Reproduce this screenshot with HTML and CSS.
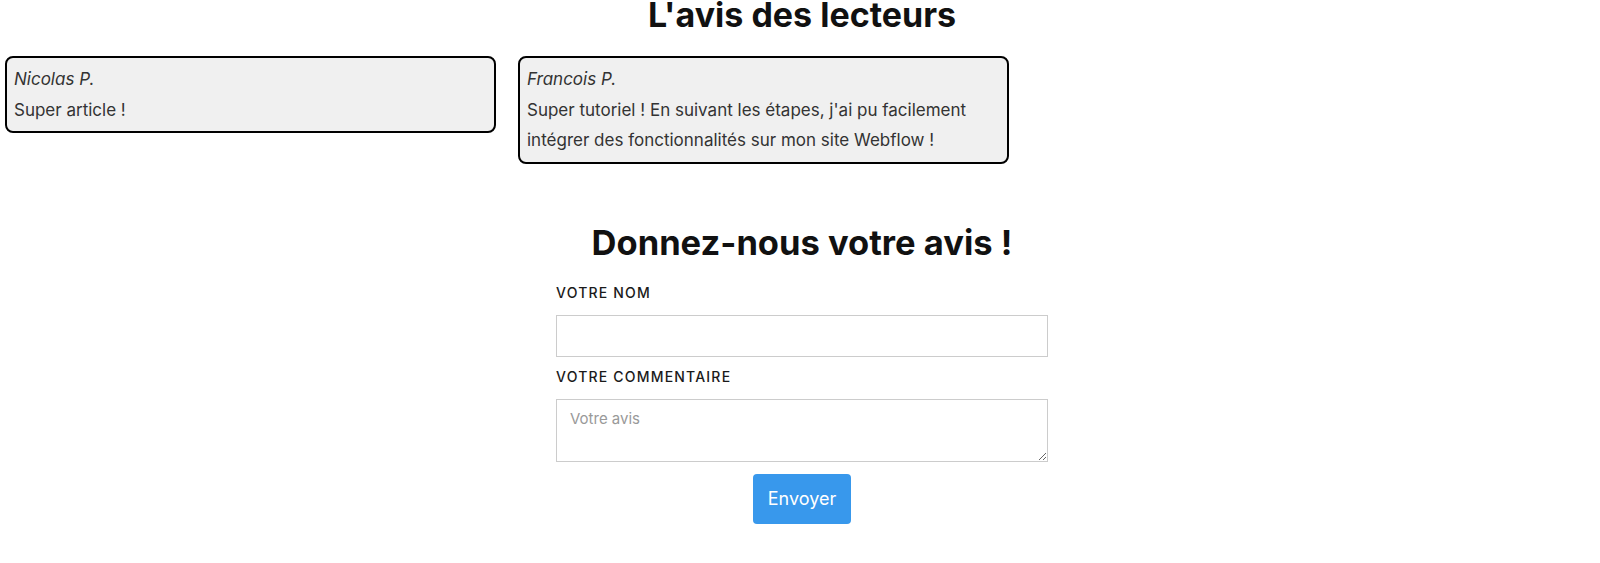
FILE: index.html
```html
<!DOCTYPE html>
<html lang="fr">
<head>
<meta charset="utf-8">
<title>L'avis des lecteurs</title>
<link rel="stylesheet" href="styles.css">
</head>
<body>
<div class="page">
  <h2 class="section-title">L'avis des lecteurs</h2>
  <div class="reviews">
    <div class="review">
      <div class="review-name">Nicolas P.</div>
      <div class="review-text">Super article !</div>
    </div>
    <div class="review">
      <div class="review-name">Francois P.</div>
      <div class="review-text">Super tutoriel ! En suivant les étapes, j'ai pu facilement intégrer des fonctionnalités sur mon site Webflow !</div>
    </div>
  </div>
  <h1 class="form-title">Donnez-nous votre avis !</h1>
  <form class="review-form">
    <label class="field-label" for="name">Votre nom</label>
    <input class="field" id="name" type="text">
    <label class="field-label" for="comment">Votre commentaire</label>
    <textarea class="field textarea" id="comment" placeholder="Votre avis"></textarea>
    <div class="actions">
      <button class="submit" type="button">Envoyer</button>
    </div>
  </form>
</div>
</body>
</html>
```
FILE: styles.css
```css
html, body {
  margin: 0;
  padding: 0;
  background: #ffffff;
}
body {
  font-family: Inter, "Noto Sans", sans-serif;
  color: #333333;
  font-size: 16px;
}
.page {
  box-sizing: border-box;
  width: 1600px;
  padding-left: 4px;
}
.section-title {
  margin: 0;
  font-size: 34px;
  line-height: 30px;
  font-weight: 700;
  color: #111111;
  text-align: center;
}
.reviews {
  display: flex;
  gap: 22px;
  margin: 26px 0 0 1px;
  align-items: flex-start;
}
.review {
  width: 491px;
  box-sizing: border-box;
  border: 2px solid #000000;
  border-radius: 8px;
  background: #f0f0f0;
  padding: 6px 6px 6px 7px;
  font-size: 17px;
  line-height: 30.5px;
  color: #333333;
}
.review-name {
  font-style: italic;
}
.form-title {
  margin: 57px 0 0 0;
  font-size: 34.5px;
  line-height: 44px;
  font-weight: 700;
  color: #111111;
  text-align: center;
}
.review-form {
  width: 492px;
  margin: 18px auto 0 auto;
  display: flex;
  flex-direction: column;
}
.field-label {
  font-size: 14px;
  line-height: 20px;
  font-weight: 500;
  text-transform: uppercase;
  letter-spacing: 1.2px;
  color: #1a1a1a;
  margin-bottom: 12px;
}
.field {
  box-sizing: border-box;
  width: 100%;
  height: 42px;
  border: 1px solid #cccccc;
  padding: 9px 13px 8px 13px;
  font-family: inherit;
  font-size: 15px;
  color: #333333;
  margin: 0 0 10px 0;
  background: #ffffff;
}
.textarea {
  height: 63px;
  resize: vertical;
  margin-bottom: 12px;
  line-height: 20px;
}
.textarea::placeholder {
  color: #999999;
}
.actions {
  display: flex;
  justify-content: center;
}
.submit {
  width: 98px;
  height: 50px;
  border: none;
  border-radius: 4px;
  background: #3898ec;
  color: #ffffff;
  font-family: inherit;
  font-size: 18px;
  padding: 0;
  cursor: pointer;
}
```
